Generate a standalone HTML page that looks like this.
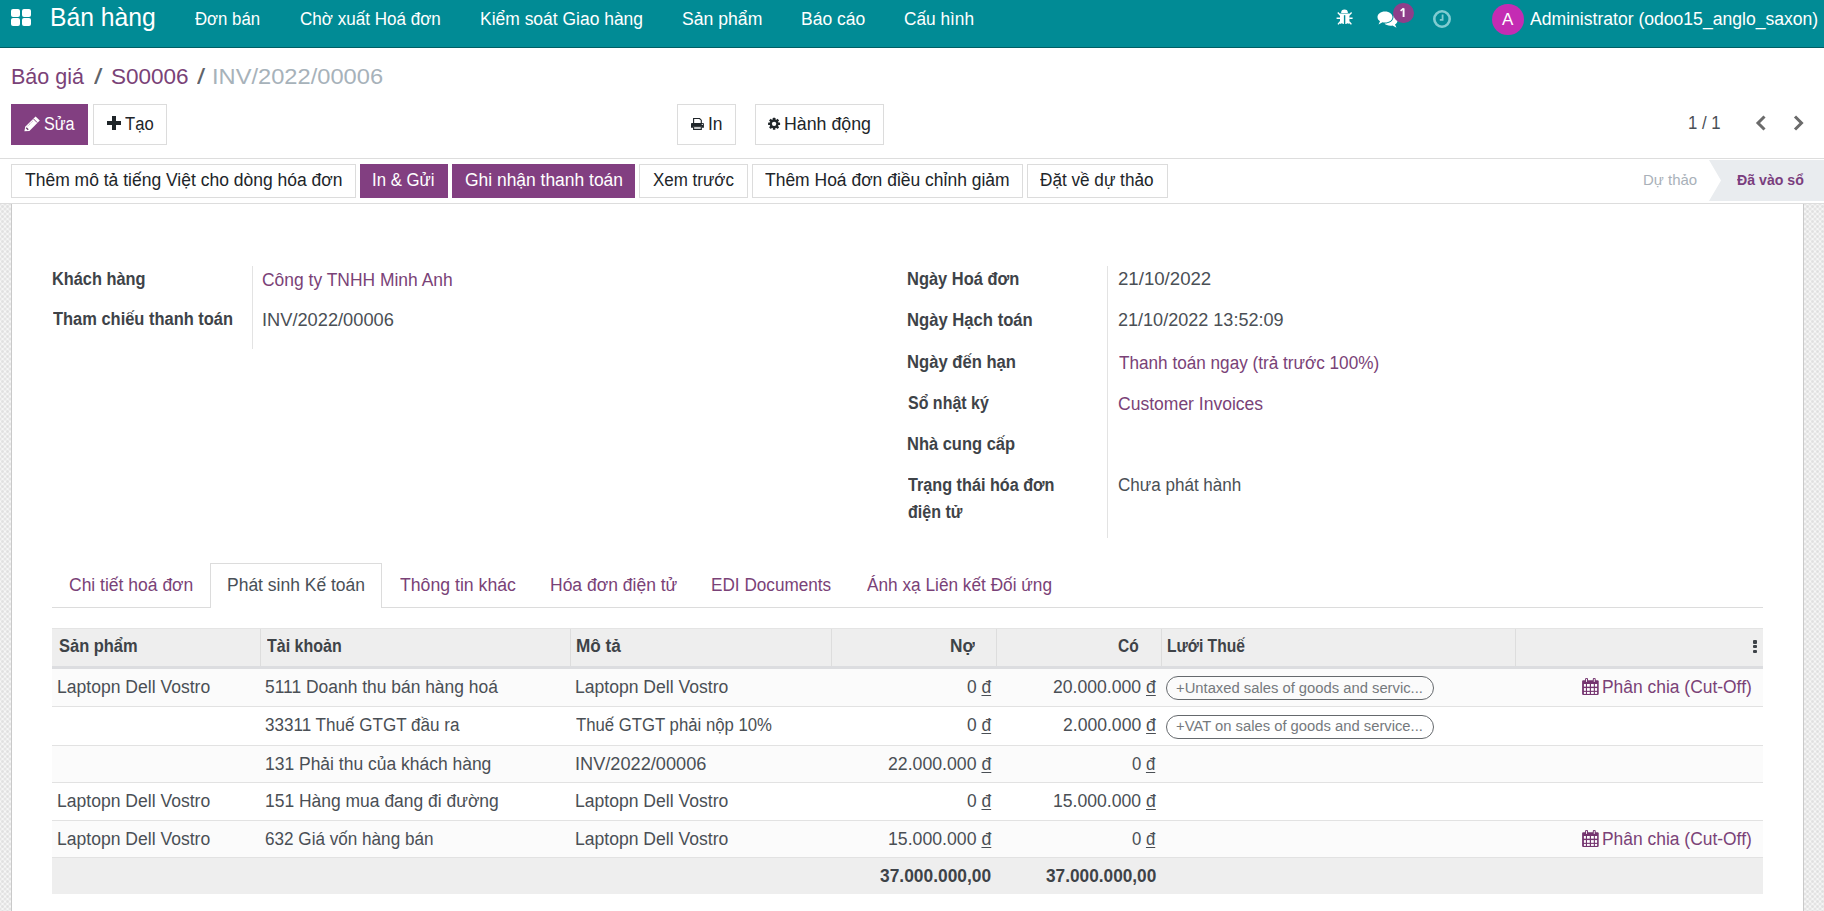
<!DOCTYPE html>
<html><head><meta charset="utf-8">
<style>
html,body{margin:0;padding:0;}
body{width:1824px;height:911px;overflow:hidden;position:relative;background:#fff;font-family:"Liberation Sans",sans-serif;}
.a{position:absolute;box-sizing:border-box;}
.t{position:absolute;white-space:nowrap;transform-origin:0 0;font-family:"Liberation Sans",sans-serif;}
svg{position:absolute;overflow:visible;}
u{text-underline-offset:2px;text-decoration-thickness:1px;}
</style></head><body>
<!-- background checker below statusbar -->
<div class="a" style="left:0;top:204px;width:1824px;height:707px;background-color:#f6f6f6;background-image:radial-gradient(circle,#e0e0e0 0.9px,transparent 1.9px),radial-gradient(circle,#e0e0e0 0.9px,transparent 1.9px);background-size:5px 5px;background-position:0 0,2.5px 2.5px;"></div>
<!-- sheet -->
<div class="a" style="left:11px;top:204px;width:1793px;height:720px;background:#fff;border-left:1px solid #c9c9c9;border-right:1px solid #c9c9c9;"></div>

<!-- navbar -->
<div class="a" style="left:0;top:0;width:1824px;height:47px;background:#018b95;"></div>
<div class="a" style="left:0;top:47px;width:1824px;height:1px;background:#015e64;"></div>
<div class="a" style="left:11px;top:9px;width:9px;height:8px;background:#fff;border-radius:2px;"></div>
<div class="a" style="left:22px;top:9px;width:9px;height:8px;background:#fff;border-radius:2px;"></div>
<div class="a" style="left:11px;top:18px;width:9px;height:8px;background:#fff;border-radius:2px;"></div>
<div class="a" style="left:22px;top:18px;width:9px;height:8px;background:#fff;border-radius:2px;"></div>
<!-- bug -->
<svg style="left:1337px;top:9px" width="16" height="16" viewBox="0 0 16 16">
 <path d="M4.1 4 A3.4 3.4 0 0 1 10.9 4 Z" fill="#fff"/>
 <path d="M3 4.6 H12.4 V15.1 L10.6 14.3 L9 15.1 H6.4 L4.8 14.3 L3 15.1 Z" fill="#fff"/>
 <rect x="6.9" y="6.2" width="1.4" height="9" fill="#018b95"/>
 <path d="M0.8 3.4 L3.4 6.2 M14.6 3.4 L12 6.2 M-0.4 9.3 H3.2 M12.2 9.3 H15.6 M3.2 12.8 L1 15.4 M12.2 12.8 L14.4 15.4" stroke="#fff" stroke-width="1.4"/>
</svg>
<!-- comments -->
<svg style="left:1377px;top:11px" width="21" height="17" viewBox="0 0 21 17">
 <path d="M8 0.5 C12.5 0.5 15.5 3 15.5 6 C15.5 9 12.5 11.5 8 11.5 C7 11.5 6 11.3 5.5 11.2 L1.5 13.5 L3 10.2 C1.3 9.2 0.5 7.8 0.5 6 C0.5 3 3.5 0.5 8 0.5 Z" fill="#fff"/>
 <path d="M16.5 4.5 C19 5.5 20.5 7.2 20.5 9.5 C20.5 11.2 19.6 12.6 18 13.5 L19.5 16.8 L15.5 14.5 C15 14.6 14.4 14.7 13.5 14.7 C10.8 14.7 8.6 13.8 7.5 12.5 C12.5 12.5 16.5 9.8 16.5 6 Z" fill="#fff"/>
</svg>
<div class="a" style="left:1392.5px;top:2.5px;width:21.5px;height:20px;border-radius:11px;background:#8e3e8a;"></div>
<svg style="left:1400px;top:8px" width="6" height="10" viewBox="0 0 6 10"><path d="M3.6 0.4 V9" stroke="#fff" stroke-width="1.9" fill="none"/><path d="M0.6 2.8 L3.6 0.4" stroke="#fff" stroke-width="1.6" fill="none"/></svg>
<!-- clock -->
<svg style="left:1433px;top:9.5px" width="18" height="18" viewBox="0 0 18 18">
 <circle cx="9" cy="9" r="7.7" fill="none" stroke="#80ccd1" stroke-width="2.6"/>
 <path d="M9.6 4.6 V9.9 H6.8" fill="none" stroke="#80ccd1" stroke-width="1.8"/>
</svg>
<!-- avatar -->
<div class="a" style="left:1491.5px;top:3.5px;width:32px;height:31.5px;border-radius:50%;background:#c42cb3;"></div>
<div class="t" style="left:1502px;top:11px;font-size:17px;line-height:17px;color:#fff;">A</div>

<!-- control panel -->
<div class="a" style="left:0;top:158px;width:1824px;height:1px;background:#dddddd;"></div>
<div class="a" style="left:11px;top:104px;width:77px;height:41px;background:#823f81;"></div>
<div class="a" style="left:93px;top:104px;width:74px;height:41px;background:#fff;border:1px solid #dcdcdc;"></div>
<div class="a" style="left:677px;top:104px;width:59px;height:41px;background:#fff;border:1px solid #dcdcdc;"></div>
<div class="a" style="left:755px;top:104px;width:129px;height:41px;background:#fff;border:1px solid #dcdcdc;"></div>
<!-- pencil -->
<svg style="left:24px;top:116px" width="16" height="16" viewBox="0 0 16 16">
 <path d="M0.4 15.2 L1.2 10.8 L11.6 0.4 L15.8 4.6 L5.4 15 Z" fill="#fff"/>
 <path d="M9.4 2.8 L13.2 6.6" stroke="#823f81" stroke-width="1"/>
 <path d="M2.2 11.8 L4.2 13.8" stroke="#6a3a6a" stroke-width="1.3"/>
 <path d="M3.6 10.2 L8.6 5.2" stroke="#9a6a9a" stroke-width="0.8" stroke-dasharray="1 1"/>
</svg>
<!-- plus -->
<svg style="left:106.5px;top:116.3px" width="14" height="14" viewBox="0 0 14 14">
 <path d="M5 0 H9 V5 H14 V9 H9 V14 H5 V9 H0 V5 H5 Z" fill="#1f2529"/>
</svg>
<!-- printer -->
<svg style="left:691px;top:117px" width="14" height="14" viewBox="0 0 14 14">
 <path d="M2.6 6.2 V1.5 H8.6 L10.3 3.2 V6.2" fill="none" stroke="#1f2529" stroke-width="1.1"/>
 <path d="M0.9 5.9 H12 Q12.9 5.9 12.9 6.8 V10.8 H10.8 V9.6 H2.1 V10.8 H0 V6.8 Q0 5.9 0.9 5.9 Z" fill="#1f2529"/>
 <circle cx="11.3" cy="7.4" r="0.6" fill="#fff"/>
 <path d="M2.6 9.8 H10.3 V12.4 H2.6 Z" fill="none" stroke="#1f2529" stroke-width="1.1"/>
</svg>
<!-- gear -->
<svg style="left:768px;top:118px" width="13" height="12" viewBox="0 0 13 12">
 <g transform="translate(6.1 5.85)" fill="#1f2529"><rect x="-1.25" y="-6.0" width="2.5" height="3" rx="0.4" transform="rotate(0)"/><rect x="-1.25" y="-6.0" width="2.5" height="3" rx="0.4" transform="rotate(45)"/><rect x="-1.25" y="-6.0" width="2.5" height="3" rx="0.4" transform="rotate(90)"/><rect x="-1.25" y="-6.0" width="2.5" height="3" rx="0.4" transform="rotate(135)"/><rect x="-1.25" y="-6.0" width="2.5" height="3" rx="0.4" transform="rotate(180)"/><rect x="-1.25" y="-6.0" width="2.5" height="3" rx="0.4" transform="rotate(225)"/><rect x="-1.25" y="-6.0" width="2.5" height="3" rx="0.4" transform="rotate(270)"/><rect x="-1.25" y="-6.0" width="2.5" height="3" rx="0.4" transform="rotate(315)"/><circle r="4.5"/><circle r="2.2" fill="#fff"/></g>
</svg>
<!-- pager chevrons -->
<svg style="left:1755px;top:115px" width="12" height="16" viewBox="0 0 12 16">
 <path d="M9.5 1.5 L3 8 L9.5 14.5" fill="none" stroke="#6b6b6b" stroke-width="3"/>
</svg>
<svg style="left:1793px;top:115px" width="12" height="16" viewBox="0 0 12 16">
 <path d="M2 1.5 L8.5 8 L2 14.5" fill="none" stroke="#6b6b6b" stroke-width="3"/>
</svg>

<!-- status bar -->
<div class="a" style="left:0;top:203px;width:1824px;height:1px;background:#dddddd;"></div>
<div class="a" style="left:11px;top:164px;width:345px;height:34px;background:#fff;border:1px solid #dcdcdc;"></div>
<div class="a" style="left:360px;top:164px;width:88px;height:34px;background:#823f81;"></div>
<div class="a" style="left:452px;top:164px;width:183px;height:34px;background:#823f81;"></div>
<div class="a" style="left:639px;top:164px;width:109px;height:34px;background:#fff;border:1px solid #dcdcdc;"></div>
<div class="a" style="left:752px;top:164px;width:271px;height:34px;background:#fff;border:1px solid #dcdcdc;"></div>
<div class="a" style="left:1027px;top:164px;width:141px;height:34px;background:#fff;border:1px solid #dcdcdc;"></div>
<svg style="left:1709px;top:160px" width="115" height="41" viewBox="0 0 115 41">
 <path d="M0 0 H115 V41 H0 L12 20.5 Z" fill="#e9ecef"/>
</svg>

<!-- form separators -->
<div class="a" style="left:252px;top:266px;width:1px;height:83px;background:#e3e3e3;"></div>
<div class="a" style="left:1107px;top:266px;width:1px;height:272px;background:#e3e3e3;"></div>

<!-- tabs -->
<div class="a" style="left:52px;top:607px;width:1711px;height:1px;background:#dcdcdc;"></div>
<div class="a" style="left:210px;top:563px;width:172px;height:45px;background:#fff;border:1px solid #dcdcdc;border-bottom:none;"></div>

<!-- table -->
<div class="a" style="left:52px;top:628px;width:1711px;height:38px;background:#eeeeee;border-top:1px solid #e4e4e4;"></div>
<div class="a" style="left:52px;top:666px;width:1711px;height:3px;background:#dcdde0;"></div>
<div class="a" style="left:260px;top:629px;width:1px;height:37px;background:#dddddd;"></div>
<div class="a" style="left:570px;top:629px;width:1px;height:37px;background:#dddddd;"></div>
<div class="a" style="left:831px;top:629px;width:1px;height:37px;background:#dddddd;"></div>
<div class="a" style="left:996px;top:629px;width:1px;height:37px;background:#dddddd;"></div>
<div class="a" style="left:1161px;top:629px;width:1px;height:37px;background:#dddddd;"></div>
<div class="a" style="left:1515px;top:629px;width:1px;height:37px;background:#dddddd;"></div>
<div class="a" style="left:52px;top:669px;width:1711px;height:37px;background:#fbfbfb;"></div>
<div class="a" style="left:52px;top:745px;width:1711px;height:37px;background:#fbfbfb;"></div>
<div class="a" style="left:52px;top:820px;width:1711px;height:37px;background:#fbfbfb;"></div>
<div class="a" style="left:52px;top:706px;width:1711px;height:1px;background:#e2e2e2;"></div>
<div class="a" style="left:52px;top:745px;width:1711px;height:1px;background:#e2e2e2;"></div>
<div class="a" style="left:52px;top:782px;width:1711px;height:1px;background:#e2e2e2;"></div>
<div class="a" style="left:52px;top:820px;width:1711px;height:1px;background:#e2e2e2;"></div>
<div class="a" style="left:52px;top:857px;width:1711px;height:1px;background:#e2e2e2;"></div>
<div class="a" style="left:52px;top:858px;width:1711px;height:36px;background:#eeeeee;"></div>
<!-- kebab -->
<div class="a" style="left:1753px;top:640px;width:4px;height:3.5px;border-radius:1px;background:#3e4348;"></div>
<div class="a" style="left:1753px;top:644.8px;width:4px;height:3.5px;border-radius:1px;background:#3e4348;"></div>
<div class="a" style="left:1753px;top:649.6px;width:4px;height:3.5px;border-radius:1px;background:#3e4348;"></div>
<!-- tags -->
<div class="a" style="left:1166px;top:676px;width:268px;height:23.5px;border:1.5px solid #65696d;border-radius:12px;"></div>
<div class="a" style="left:1166px;top:715px;width:268px;height:23.5px;border:1.5px solid #65696d;border-radius:12px;"></div>
<!-- calendars -->
<svg style="left:1582px;top:678px" width="17" height="17" viewBox="0 0 17 17">
 <rect x="0.1" y="2.2" width="16.6" height="14.8" rx="1.2" fill="#74346f"/>
 <g fill="#fff"><rect x="1.9" y="6.0" width="2.0" height="2.65"/><rect x="5.0" y="6.0" width="2.8" height="2.65"/><rect x="9.0" y="6.0" width="2.8" height="2.65"/><rect x="12.9" y="6.0" width="2.2" height="2.65"/><rect x="1.9" y="10.1" width="2.0" height="2.70"/><rect x="5.0" y="10.1" width="2.8" height="2.70"/><rect x="9.0" y="10.1" width="2.8" height="2.70"/><rect x="12.9" y="10.1" width="2.2" height="2.70"/><rect x="1.9" y="13.9" width="2.0" height="2.00"/><rect x="5.0" y="13.9" width="2.8" height="2.00"/><rect x="9.0" y="13.9" width="2.8" height="2.00"/><rect x="12.9" y="13.9" width="2.2" height="2.00"/></g>
 <rect x="3.1" y="0" width="2.9" height="4.6" rx="1" fill="#74346f"/><rect x="4.1" y="0.9" width="0.9" height="3" fill="#fff"/>
 <rect x="10.8" y="0" width="2.9" height="4.6" rx="1" fill="#74346f"/><rect x="11.8" y="0.9" width="0.9" height="3" fill="#fff"/>
</svg>
<svg style="left:1582px;top:829.5px" width="17" height="17" viewBox="0 0 17 17">
 <rect x="0.1" y="2.2" width="16.6" height="14.8" rx="1.2" fill="#74346f"/>
 <g fill="#fff"><rect x="1.9" y="6.0" width="2.0" height="2.65"/><rect x="5.0" y="6.0" width="2.8" height="2.65"/><rect x="9.0" y="6.0" width="2.8" height="2.65"/><rect x="12.9" y="6.0" width="2.2" height="2.65"/><rect x="1.9" y="10.1" width="2.0" height="2.70"/><rect x="5.0" y="10.1" width="2.8" height="2.70"/><rect x="9.0" y="10.1" width="2.8" height="2.70"/><rect x="12.9" y="10.1" width="2.2" height="2.70"/><rect x="1.9" y="13.9" width="2.0" height="2.00"/><rect x="5.0" y="13.9" width="2.8" height="2.00"/><rect x="9.0" y="13.9" width="2.8" height="2.00"/><rect x="12.9" y="13.9" width="2.2" height="2.00"/></g>
 <rect x="3.1" y="0" width="2.9" height="4.6" rx="1" fill="#74346f"/><rect x="4.1" y="0.9" width="0.9" height="3" fill="#fff"/>
 <rect x="10.8" y="0" width="2.9" height="4.6" rx="1" fill="#74346f"/><rect x="11.8" y="0.9" width="0.9" height="3" fill="#fff"/>
</svg>

<div class="t" style="left:49.82px;top:5px;font-size:25px;line-height:25px;color:#ffffff;transform:scaleX(0.9885)">Bán hàng</div>
<div class="t" style="left:195.20px;top:10px;font-size:18px;line-height:18px;color:#ffffff;transform:scaleX(0.9319)">Đơn bán</div>
<div class="t" style="left:299.85px;top:10px;font-size:18px;line-height:18px;color:#ffffff;transform:scaleX(0.9469)">Chờ xuất Hoá đơn</div>
<div class="t" style="left:480.33px;top:10px;font-size:18px;line-height:18px;color:#ffffff;transform:scaleX(0.9699)">Kiểm soát Giao hàng</div>
<div class="t" style="left:681.92px;top:10px;font-size:18px;line-height:18px;color:#ffffff;transform:scaleX(0.9788)">Sản phẩm</div>
<div class="t" style="left:800.63px;top:10px;font-size:18px;line-height:18px;color:#ffffff;transform:scaleX(0.9723)">Báo cáo</div>
<div class="t" style="left:904.34px;top:10px;font-size:18px;line-height:18px;color:#ffffff;transform:scaleX(0.9592)">Cấu hình</div>
<div class="t" style="left:1530.30px;top:10px;font-size:18px;line-height:18px;color:#ffffff;transform:scaleX(0.9763)">Administrator (odoo15_anglo_saxon)</div>
<div class="t" style="left:11.02px;top:66px;font-size:22px;line-height:22px;color:#7a4277;transform:scaleX(0.9784)">Báo giá</div>
<div class="t" style="left:94.30px;top:66px;font-size:22px;line-height:22px;color:#5f6469;transform:scaleX(1.3833)">/</div>
<div class="t" style="left:110.78px;top:66px;font-size:22px;line-height:22px;color:#7a4277;transform:scaleX(1.0230)">S00006</div>
<div class="t" style="left:197.00px;top:66px;font-size:22px;line-height:22px;color:#5f6469;transform:scaleX(1.3333)">/</div>
<div class="t" style="left:211.65px;top:66px;font-size:22px;line-height:22px;color:#a7b2ba;transform:scaleX(1.0756)">INV/2022/00006</div>
<div class="t" style="left:43.80px;top:115px;font-size:18px;line-height:18px;color:#ffffff;transform:scaleX(0.8970)">Sửa</div>
<div class="t" style="left:124.80px;top:115px;font-size:18px;line-height:18px;color:#212529;transform:scaleX(0.9226)">Tạo</div>
<div class="t" style="left:708.03px;top:115px;font-size:18px;line-height:18px;color:#212529;transform:scaleX(0.9692)">In</div>
<div class="t" style="left:784.01px;top:115px;font-size:18px;line-height:18px;color:#212529;transform:scaleX(0.9872)">Hành động</div>
<div class="t" style="left:1688.07px;top:114px;font-size:18px;line-height:18px;color:#4a4f55;transform:scaleX(0.9324)">1 / 1</div>
<div class="t" style="left:25.20px;top:171px;font-size:18px;line-height:18px;color:#212529;transform:scaleX(0.9718)">Thêm mô tả tiếng Việt cho dòng hóa đơn</div>
<div class="t" style="left:372.47px;top:171px;font-size:18px;line-height:18px;color:#ffffff;transform:scaleX(0.9323)">In &amp; Gửi</div>
<div class="t" style="left:464.53px;top:171px;font-size:18px;line-height:18px;color:#ffffff;transform:scaleX(0.9683)">Ghi nhận thanh toán</div>
<div class="t" style="left:653.20px;top:171px;font-size:18px;line-height:18px;color:#212529;transform:scaleX(0.9419)">Xem trước</div>
<div class="t" style="left:765.30px;top:171px;font-size:18px;line-height:18px;color:#212529;transform:scaleX(0.9709)">Thêm Hoá đơn điều chỉnh giảm</div>
<div class="t" style="left:1040.40px;top:171px;font-size:18px;line-height:18px;color:#212529;transform:scaleX(0.9529)">Đặt về dự thảo</div>
<div class="t" style="left:1642.50px;top:172px;font-size:15px;line-height:15px;color:#a9b1b9;transform:scaleX(0.9981)">Dự thảo</div>
<div class="t" style="left:1737.00px;top:172px;font-size:15px;line-height:15px;font-weight:700;color:#7a3e7e;transform:scaleX(0.9437)">Đã vào sổ</div>
<div class="t" style="left:51.99px;top:270px;font-size:18px;line-height:18px;font-weight:700;color:#3e4348;transform:scaleX(0.9079)">Khách hàng</div>
<div class="t" style="left:52.90px;top:310px;font-size:18px;line-height:18px;font-weight:700;color:#3e4348;transform:scaleX(0.9138)">Tham chiếu thanh toán</div>
<div class="t" style="left:262.43px;top:271px;font-size:18px;line-height:18px;color:#7a4277;transform:scaleX(0.9692)">Công ty TNHH Minh Anh</div>
<div class="t" style="left:262.39px;top:311px;font-size:18px;line-height:18px;color:#4a4f55;transform:scaleX(1.0132)">INV/2022/00006</div>
<div class="t" style="left:907.19px;top:270px;font-size:18px;line-height:18px;font-weight:700;color:#3e4348;transform:scaleX(0.9140)">Ngày Hoá đơn</div>
<div class="t" style="left:907.18px;top:311px;font-size:18px;line-height:18px;font-weight:700;color:#3e4348;transform:scaleX(0.9246)">Ngày Hạch toán</div>
<div class="t" style="left:907.18px;top:353px;font-size:18px;line-height:18px;font-weight:700;color:#3e4348;transform:scaleX(0.9233)">Ngày đến hạn</div>
<div class="t" style="left:908.10px;top:394px;font-size:18px;line-height:18px;font-weight:700;color:#3e4348;transform:scaleX(0.8879)">Sổ nhật ký</div>
<div class="t" style="left:907.18px;top:435px;font-size:18px;line-height:18px;font-weight:700;color:#3e4348;transform:scaleX(0.9154)">Nhà cung cấp</div>
<div class="t" style="left:908.10px;top:476px;font-size:18px;line-height:18px;font-weight:700;color:#3e4348;transform:scaleX(0.9000)">Trạng thái hóa đơn</div>
<div class="t" style="left:908.10px;top:503px;font-size:18px;line-height:18px;font-weight:700;color:#3e4348;transform:scaleX(0.8918)">điện tử</div>
<div class="t" style="left:1117.77px;top:270px;font-size:18px;line-height:18px;color:#4a4f55;transform:scaleX(1.0348)">21/10/2022</div>
<div class="t" style="left:1117.80px;top:311px;font-size:18px;line-height:18px;color:#4a4f55;transform:scaleX(1.0024)">21/10/2022 13:52:09</div>
<div class="t" style="left:1118.80px;top:354px;font-size:18px;line-height:18px;color:#7a4277;transform:scaleX(0.9529)">Thanh toán ngay (trả trước 100%)</div>
<div class="t" style="left:1117.83px;top:395px;font-size:18px;line-height:18px;color:#7a4277;transform:scaleX(0.9736)">Customer Invoices</div>
<div class="t" style="left:1117.85px;top:476px;font-size:18px;line-height:18px;color:#4a4f55;transform:scaleX(0.9473)">Chưa phát hành</div>
<div class="t" style="left:69.23px;top:576px;font-size:18px;line-height:18px;color:#7a4277;transform:scaleX(0.9722)">Chi tiết hoá đơn</div>
<div class="t" style="left:227.03px;top:576px;font-size:18px;line-height:18px;color:#495057;transform:scaleX(0.9714)">Phát sinh Kế toán</div>
<div class="t" style="left:399.50px;top:576px;font-size:18px;line-height:18px;color:#7a4277;transform:scaleX(0.9814)">Thông tin khác</div>
<div class="t" style="left:549.63px;top:576px;font-size:18px;line-height:18px;color:#7a4277;transform:scaleX(0.9723)">Hóa đơn điện tử</div>
<div class="t" style="left:710.85px;top:576px;font-size:18px;line-height:18px;color:#7a4277;transform:scaleX(0.9536)">EDI Documents</div>
<div class="t" style="left:866.70px;top:576px;font-size:18px;line-height:18px;color:#7a4277;transform:scaleX(0.9578)">Ánh xạ Liên kết Đối ứng</div>
<div class="t" style="left:59.20px;top:637px;font-size:18px;line-height:18px;font-weight:700;color:#3e4348;transform:scaleX(0.9141)">Sản phẩm</div>
<div class="t" style="left:267.10px;top:637px;font-size:18px;line-height:18px;font-weight:700;color:#3e4348;transform:scaleX(0.8892)">Tài khoản</div>
<div class="t" style="left:576.25px;top:637px;font-size:18px;line-height:18px;font-weight:700;color:#3e4348;transform:scaleX(0.9543)">Mô tả</div>
<div class="t" style="left:950.04px;top:637px;font-size:18px;line-height:18px;font-weight:700;color:#3e4348;transform:scaleX(0.9600)">Nợ</div>
<div class="t" style="left:1118.00px;top:637px;font-size:18px;line-height:18px;font-weight:700;color:#3e4348;transform:scaleX(0.8625)">Có</div>
<div class="t" style="left:1167.33px;top:637px;font-size:18px;line-height:18px;font-weight:700;color:#3e4348;transform:scaleX(0.8674)">Lưới Thuế</div>
<div class="t" style="left:57.32px;top:678px;font-size:18px;line-height:18px;color:#4a4f55;transform:scaleX(0.9750)">Laptopn Dell Vostro</div>
<div class="t" style="left:264.63px;top:678px;font-size:18px;line-height:18px;color:#4a4f55;transform:scaleX(0.9679)">5111 Doanh thu bán hàng hoá</div>
<div class="t" style="left:574.72px;top:678px;font-size:18px;line-height:18px;color:#4a4f55;transform:scaleX(0.9756)">Laptopn Dell Vostro</div>
<div class="t" style="left:966.60px;top:678px;font-size:18px;line-height:18px;color:#4a4f55;transform:scaleX(0.9640)">0 <u>đ</u></div>
<div class="t" style="left:1052.82px;top:678px;font-size:18px;line-height:18px;color:#4a4f55;transform:scaleX(0.9779)">20.000.000 <u>đ</u></div>
<div class="t" style="left:264.65px;top:716px;font-size:18px;line-height:18px;color:#4a4f55;transform:scaleX(0.9480)">33311 Thuế GTGT đầu ra</div>
<div class="t" style="left:575.70px;top:716px;font-size:18px;line-height:18px;color:#4a4f55;transform:scaleX(0.9295)">Thuế GTGT phải nộp 10%</div>
<div class="t" style="left:966.60px;top:716px;font-size:18px;line-height:18px;color:#4a4f55;transform:scaleX(0.9640)">0 <u>đ</u></div>
<div class="t" style="left:1062.72px;top:716px;font-size:18px;line-height:18px;color:#4a4f55;transform:scaleX(0.9766)">2.000.000 <u>đ</u></div>
<div class="t" style="left:264.63px;top:755px;font-size:18px;line-height:18px;color:#4a4f55;transform:scaleX(0.9706)">131 Phải thu của khách hàng</div>
<div class="t" style="left:574.69px;top:755px;font-size:18px;line-height:18px;color:#4a4f55;transform:scaleX(1.0101)">INV/2022/00006</div>
<div class="t" style="left:887.52px;top:755px;font-size:18px;line-height:18px;color:#4a4f55;transform:scaleX(0.9827)">22.000.000 <u>đ</u></div>
<div class="t" style="left:1132.30px;top:755px;font-size:18px;line-height:18px;color:#4a4f55;transform:scaleX(0.9280)">0 <u>đ</u></div>
<div class="t" style="left:57.32px;top:792px;font-size:18px;line-height:18px;color:#4a4f55;transform:scaleX(0.9750)">Laptopn Dell Vostro</div>
<div class="t" style="left:264.63px;top:792px;font-size:18px;line-height:18px;color:#4a4f55;transform:scaleX(0.9699)">151 Hàng mua đang đi đường</div>
<div class="t" style="left:574.72px;top:792px;font-size:18px;line-height:18px;color:#4a4f55;transform:scaleX(0.9756)">Laptopn Dell Vostro</div>
<div class="t" style="left:966.60px;top:792px;font-size:18px;line-height:18px;color:#4a4f55;transform:scaleX(0.9640)">0 <u>đ</u></div>
<div class="t" style="left:1052.82px;top:792px;font-size:18px;line-height:18px;color:#4a4f55;transform:scaleX(0.9779)">15.000.000 <u>đ</u></div>
<div class="t" style="left:57.32px;top:830px;font-size:18px;line-height:18px;color:#4a4f55;transform:scaleX(0.9750)">Laptopn Dell Vostro</div>
<div class="t" style="left:264.65px;top:830px;font-size:18px;line-height:18px;color:#4a4f55;transform:scaleX(0.9511)">632 Giá vốn hàng bán</div>
<div class="t" style="left:574.72px;top:830px;font-size:18px;line-height:18px;color:#4a4f55;transform:scaleX(0.9756)">Laptopn Dell Vostro</div>
<div class="t" style="left:887.52px;top:830px;font-size:18px;line-height:18px;color:#4a4f55;transform:scaleX(0.9827)">15.000.000 <u>đ</u></div>
<div class="t" style="left:1132.30px;top:830px;font-size:18px;line-height:18px;color:#4a4f55;transform:scaleX(0.9280)">0 <u>đ</u></div>
<div class="t" style="left:880.20px;top:867px;font-size:18px;line-height:18px;font-weight:700;color:#3e4348;transform:scaleX(0.9652)">37.000.000,00</div>
<div class="t" style="left:1045.90px;top:867px;font-size:18px;line-height:18px;font-weight:700;color:#3e4348;transform:scaleX(0.9583)">37.000.000,00</div>
<div class="t" style="left:1176.00px;top:681px;font-size:14px;line-height:14px;color:#75797d;transform:scaleX(1.0558)">+Untaxed sales of goods and servic...</div>
<div class="t" style="left:1176.00px;top:719px;font-size:14px;line-height:14px;color:#75797d;transform:scaleX(1.0558)">+VAT on sales of goods and service...</div>
<div class="t" style="left:1601.73px;top:678px;font-size:18px;line-height:18px;color:#7a4277;transform:scaleX(0.9680)">Phân chia (Cut-Off)</div>
<div class="t" style="left:1601.73px;top:830px;font-size:18px;line-height:18px;color:#7a4277;transform:scaleX(0.9680)">Phân chia (Cut-Off)</div>
</body></html>
